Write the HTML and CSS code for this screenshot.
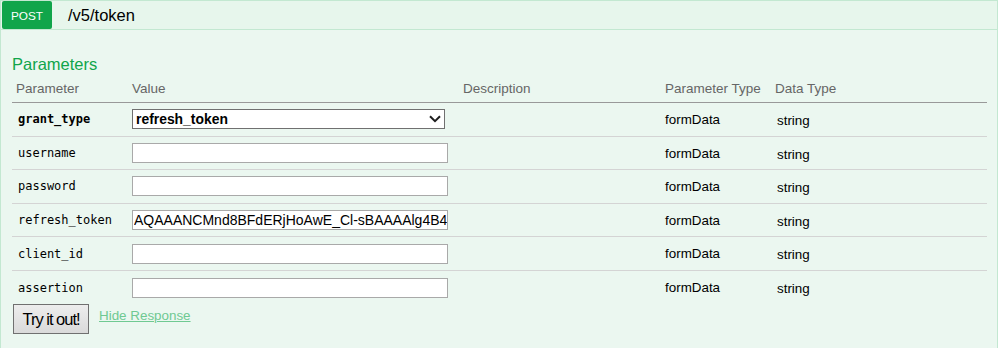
FILE: index.html
```html
<!DOCTYPE html>
<html>
<head>
<meta charset="utf-8">
<link rel="stylesheet" href="styles.css">
</head>
<body>
<div class="operation">
  <div class="heading">
    <span class="method">POST</span>
    <span class="path">/v5/token</span>
  </div>
  <div class="content">
    <h4 class="section-title">Parameters</h4>
    <div class="params">
      <div class="row head">
        <div class="cell">Parameter</div>
        <div class="cell">Value</div>
        <div class="cell">Description</div>
        <div class="cell">Parameter Type</div>
        <div class="cell">Data Type</div>
      </div>
      <div class="row">
        <div class="cell name required">grant_type</div>
        <div class="cell value">
          <div class="select-wrap">
            <select class="select"><option>refresh_token</option></select>
            <svg class="chevron" width="12" height="8" viewBox="0 0 12 8"><path d="M1 1.2 L6 6.2 L11 1.2" fill="none" stroke="#1e1e1e" stroke-width="2"/></svg>
          </div>
        </div>
        <div class="cell"></div>
        <div class="cell ptype">formData</div>
        <div class="cell dtype">string</div>
      </div>
      <div class="row">
        <div class="cell name">username</div>
        <div class="cell value"><input class="input" type="text" value=""></div>
        <div class="cell"></div>
        <div class="cell ptype">formData</div>
        <div class="cell dtype">string</div>
      </div>
      <div class="row">
        <div class="cell name">password</div>
        <div class="cell value"><input class="input" type="text" value=""></div>
        <div class="cell"></div>
        <div class="cell ptype">formData</div>
        <div class="cell dtype">string</div>
      </div>
      <div class="row">
        <div class="cell name">refresh_token</div>
        <div class="cell value"><input class="input" type="text" value="AQAAANCMnd8BFdERjHoAwE_Cl-sBAAAAlg4B4dc0aGpQpCYQ"></div>
        <div class="cell"></div>
        <div class="cell ptype">formData</div>
        <div class="cell dtype">string</div>
      </div>
      <div class="row">
        <div class="cell name">client_id</div>
        <div class="cell value"><input class="input" type="text" value=""></div>
        <div class="cell"></div>
        <div class="cell ptype">formData</div>
        <div class="cell dtype">string</div>
      </div>
      <div class="row last">
        <div class="cell name">assertion</div>
        <div class="cell value"><input class="input" type="text" value=""></div>
        <div class="cell"></div>
        <div class="cell ptype">formData</div>
        <div class="cell dtype">string</div>
      </div>
    </div>
    <div class="actions">
      <button class="try-btn">Try it out!</button>
      <a class="hide-link" href="#">Hide Response</a>
    </div>
  </div>
</div>
</body>
</html>
```
FILE: styles.css
```css
html, body {
  margin: 0;
  padding: 0;
  background: #ffffff;
}
body {
  font-family: "Liberation Sans", Arial, sans-serif;
  font-size: 13.4px;
  color: #000;
}
.operation {
  width: 998px;
}
.heading {
  box-sizing: border-box;
  height: 30px;
  background: #e7f6ec;
  border: 1px solid #c3e8d1;
  display: flex;
  align-items: stretch;
}
.method {
  width: 50px;
  margin-left: 1px;
  background: #10a54a;
  color: #fff;
  border-radius: 2px;
  font-size: 11.8px;
  display: flex;
  align-items: center;
  justify-content: center;
  padding-top: 1px;
  box-sizing: border-box;
}
.path {
  margin-left: 16px;
  font-size: 16.5px;
  line-height: 29px;
  color: #000;
}
.content {
  background: #ebf7f0;
  border: 1px solid #c3e8d1;
  border-top: none;
  padding: 0 10px 14px 11px;
  height: 330px;
  box-sizing: border-box;
}
.section-title {
  margin: 0;
  padding-top: 25px;
  font-size: 16.5px;
  line-height: 19px;
  font-weight: normal;
  color: #10a54a;
  margin-bottom: 6px;
}
.params {
  width: 975px;
}
.row {
  display: grid;
  grid-template-columns: 116px 331px 202px 110px 1fr;
  box-sizing: border-box;
  height: 33.6px;
  border-bottom: 1px solid #d4d4d4;
}
.row.head {
  height: 23px;
  border-bottom: 1px solid #999;
  color: #666;
  font-size: 13.5px;
  line-height: 15px;
}
.row.head .cell {
  padding-top: 1px;
}
.row.last {
  border-bottom: none;
}
.cell {
  padding-left: 4px;
  min-width: 0;
}
.name {
  font-family: "DejaVu Sans Mono", Consolas, monospace;
  font-size: 12px;
  display: flex;
  align-items: center;
  padding-left: 6px;
  color: #000;
}
.name.required {
  font-weight: bold;
}
.value {
  display: flex;
  align-items: center;
}
.ptype {
  padding-top: 9px;
  line-height: 15px;
}
.dtype {
  padding-top: 10px;
  padding-left: 6px;
  line-height: 15px;
}
.select-wrap {
  position: relative;
  width: 313px;
  height: 20px;
}
.select {
  -webkit-appearance: none;
  appearance: none;
  box-sizing: border-box;
  width: 313px;
  height: 20px;
  margin: 0;
  border: 1px solid #707070;
  border-radius: 0;
  background: #fff;
  font-family: "Liberation Sans", Arial, sans-serif;
  font-weight: bold;
  font-size: 13.9px;
  color: #000;
  padding: 0 0 0 3px;
  line-height: 18px;
}
.chevron {
  position: absolute;
  right: 4px;
  top: 6px;
  pointer-events: none;
}
.input {
  box-sizing: border-box;
  width: 316px;
  height: 20px;
  margin: 0;
  border: 1px solid #a9a9a9;
  border-radius: 0;
  background: #fff;
  font-family: "Liberation Sans", Arial, sans-serif;
  font-size: 14px;
  color: #000;
  padding: 0 0 0 1px;
  outline: none;
}
.actions {
  display: flex;
  align-items: flex-start;
  gap: 10px;
  margin-top: -1px;
}
.try-btn {
  box-sizing: border-box;
  width: 76px;
  height: 30px;
  margin: 0 0 0 1px;
  border: 1px solid #707070;
  border-radius: 0;
  background: linear-gradient(#ededed, #dadada);
  font-family: "Liberation Sans", Arial, sans-serif;
  font-size: 16.5px;
  letter-spacing: -1px;
  color: #000;
  padding: 2px 0 0 0;
}
.hide-link {
  color: #6fc992;
  font-size: 13.4px;
  line-height: 15px;
  margin-top: 4px;
  text-decoration: underline;
}
```
